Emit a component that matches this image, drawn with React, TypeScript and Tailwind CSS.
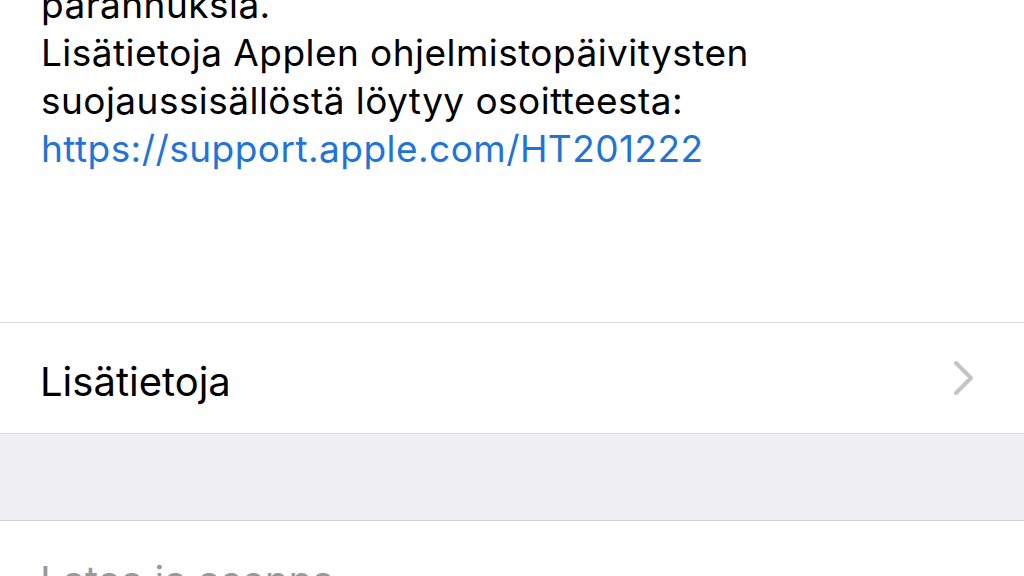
export default function App() {
  return (
    <div className="h-[576px] w-[1024px] overflow-hidden bg-white font-['Inter',sans-serif]">
      <div className="-mt-[19px] px-[41px] text-[37px] leading-[48px] tracking-[0.45px] text-black">
        <p>parannuksia.</p>
        <p>Lisätietoja Applen ohjelmistopäivitysten</p>
        <p>suojaussisällöstä löytyy osoitteesta:</p>
        <p className="text-[#1f74d6]">https://support.apple.com/HT201222</p>
      </div>

      <div className="mt-[149px] border-y border-[#dcdcdc]">
        <div className="flex h-[110px] items-center justify-between pl-[40px] pr-[48px] pt-[8px]">
          <span className="text-[40px] text-black">Lisätietoja</span>
          <svg width="24" height="36" viewBox="0 0 24 36" className="-mt-[8px]">
            <polyline
              points="4,3 19,18 4,33"
              fill="none"
              stroke="#c4c4c8"
              strokeWidth="4"
              strokeLinecap="round"
              strokeLinejoin="round"
            />
          </svg>
        </div>
      </div>

      <div className="h-[86px] bg-[#efeff4]" />

      <div className="border-t border-[#d0d0d4]">
        <div className="pl-[40px] pt-[30px] text-[40px] leading-[60px] text-[#9a9a9e]">
          Lataa ja asenna
        </div>
      </div>
    </div>
  );
}
